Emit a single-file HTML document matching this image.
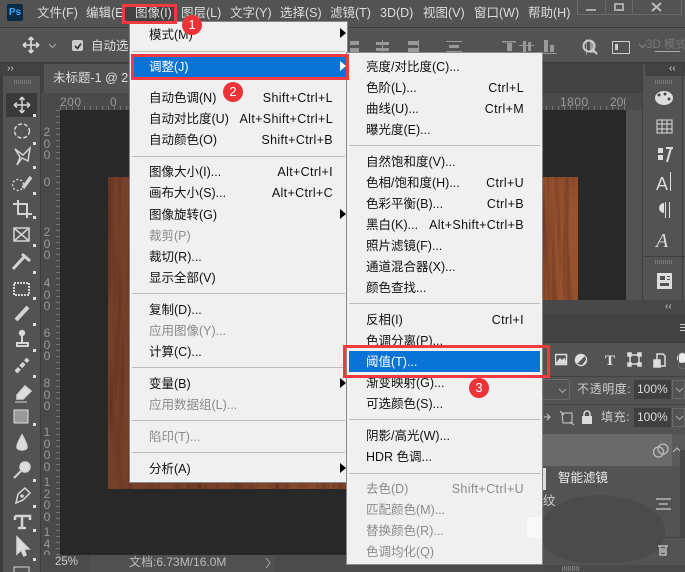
<!DOCTYPE html>
<html><head><meta charset="utf-8"><style>
html,body{margin:0;padding:0;background:#535353}
#r{position:relative;width:685px;height:572px;overflow:hidden;background:#535353;font-family:"Liberation Sans","Noto Sans CJK SC",sans-serif;font-size:12.5px;color:#ddd;filter:blur(.35px)}
#r div,#r span,#r svg{position:absolute}
.t{white-space:nowrap;line-height:16px;margin-top:-8px}
.m{color:#111}.g{color:#8b8b8b}.w{color:#fff}
.s{text-align:right;white-space:nowrap;line-height:16px;margin-top:-8px;letter-spacing:.35px}
.sep{height:1px;background:#bdbdbd}
.a{width:0;height:0;border-left:6px solid #000;border-top:5px solid transparent;border-bottom:5px solid transparent}
.rb{border:3px solid #f23b40;box-sizing:border-box}
.c{width:20px;height:20px;border-radius:50%;background:#ee3338;color:#fff;text-align:center;line-height:19px;font-size:13px}
.rt{color:#999;font-size:12px;line-height:11.500px;width:12px;text-align:center;font-family:"Liberation Sans",sans-serif}
</style></head><body><div id="r">
<!-- top bars -->
<div style="left:0;top:27px;width:685px;height:1px;background:#3b3b3b"></div>
<div style="left:0;top:62px;width:685px;height:2px;background:#3f3f3f"></div>
<div style="left:7px;top:4px;width:16px;height:17px;background:#0b2a45;border-radius:2px;color:#31a8ff;font-size:10px;line-height:17px;text-align:center;font-weight:bold">Ps</div>
<div class="t" style="left:37px;top:13px">文件(F)</div>
<div class="t" style="left:86px;top:13px">编辑(E)</div>
<div style="left:125px;top:5px;width:50px;height:18px;background:#424242"></div>
<div class="t" style="left:135px;top:13px">图像(I)</div>
<div class="t" style="left:181px;top:13px">图层(L)</div>
<div class="t" style="left:230px;top:13px">文字(Y)</div>
<div class="t" style="left:280px;top:13px">选择(S)</div>
<div class="t" style="left:330px;top:13px">滤镜(T)</div>
<div class="t" style="left:380px;top:13px">3D(D)</div>
<div class="t" style="left:423px;top:13px">视图(V)</div>
<div class="t" style="left:474px;top:13px">窗口(W)</div>
<div class="t" style="left:528px;top:13px">帮助(H)</div>
<!-- window buttons -->
<div style="left:577px;top:-2px;width:105px;height:17px;border:1px solid #6a6a6a;box-sizing:border-box"></div>
<div style="left:605px;top:0;width:1px;height:15px;background:#6a6a6a"></div>
<div style="left:632px;top:0;width:1px;height:15px;background:#6a6a6a"></div>
<div style="left:586px;top:9px;width:10px;height:2px;background:#aaa"></div>
<div style="left:614px;top:3px;width:10px;height:8px;border:2px solid #aaa;box-sizing:border-box"></div>
<svg style="left:651px;top:2px" width="11" height="10"><path d="M1 1L10 9M10 1L1 9" stroke="#bbb" stroke-width="2"/></svg>
<!-- options bar -->
<svg style="left:22px;top:36px" width="18" height="18" fill="none" stroke="#ddd" stroke-width="1.600"><path d="M9 1V17M1 9H17M9 1L6.500 4M9 1L11.500 4M9 17L6.500 14M9 17L11.500 14M1 9L4 6.500M1 9L4 11.500M17 9L14 6.500M17 9L14 11.500"/></svg>
<svg style="left:48px;top:43px" width="9" height="6" fill="none" stroke="#aaa"><path d="M1 1L4.500 4.500L8 1"/></svg>
<div style="left:72px;top:40px;width:11px;height:11px;background:#ccc;border-radius:2px"></div>
<svg style="left:73px;top:41px" width="10" height="10" fill="none" stroke="#333" stroke-width="1.600"><path d="M2 5L4.500 7.500L8 2.500"/></svg>
<div class="t" style="left:91px;top:46px;width:38px;overflow:hidden">自动选择</div>
<svg style="left:350px;top:38px" width="330" height="18" fill="#999"><path d="M0 3h9v4h-9zM0 10h9v4h-9zM32 2h1v14h-1zM26 4h13v3h-13zM26 10h13v3h-13zM68 2h1v14h-1zM58 3h10v4h-10zM58 10h10v4h-10zM96 3h16v1h-16zM96 13h16v1h-16zM99 7h10v3h-10z"/><path d="M152 3h14v1.500h-14zM157 5h5v8h-5zM169 7h15v1h-15zM173 3h3v11h-3zM178 4h3v9h-3zM192 15h15v1h-15zM194 2h4v12h-4zM200 7h4v7h-4zM236 1h1v16h-1zM240 3h4v12h-4z"/></svg>
<svg style="left:582px;top:39px" width="25" height="17" fill="none" stroke="#ccc" stroke-width="2"><circle cx="7" cy="7" r="5.500"/><path d="M11 11L15 15"/></svg>
<div style="left:612px;top:41px;width:16px;height:11px;border:1px solid #ccc"></div>
<div style="left:615px;top:44px;width:3px;height:6px;background:#ccc"></div>
<svg style="left:638px;top:43px" width="9" height="6" fill="none" stroke="#888"><path d="M1 1L4.500 4.500L8 1"/></svg>
<div class="t" style="left:646px;top:45px;color:#777;font-size:11.500px;width:39px;overflow:hidden">3D 模式</div>
<div style="left:655px;top:51px;width:25px;height:1px;background:#aaa"></div>
<!-- tab bar -->
<div style="left:41px;top:64px;width:604px;height:29px;background:#424242"></div>
<div style="left:44px;top:64px;width:120px;height:29px;background:#535353"></div>
<div class="t" style="left:53px;top:78px">未标题-1 @ 25%</div>
<div style="left:0;top:64px;width:41px;height:12px;background:#424242"></div>
<div class="t" style="left:7px;top:69px;font-size:10px;color:#ccc">››</div>
<div style="left:14px;top:80px;width:18px;height:4px;background:repeating-linear-gradient(90deg,#777 0 1px,#555 1px 2px)"></div>
<!-- left toolbar -->
<div style="left:0;top:76px;width:3px;height:496px;background:#3c3c3c"></div>
<div style="left:40px;top:64px;width:1px;height:508px;background:#3c3c3c"></div>
<div style="left:6px;top:93px;width:31px;height:24px;background:#3a3a3a"></div>
<svg style="left:3px;top:93px" width="37" height="479" fill="none" stroke="#d4d4d4" stroke-width="1.500">
<path d="M19 4V20M11 12H27M19 4L16.500 7M19 4L21.500 7M19 20L16.500 17M19 20L21.500 17M11 12L14 9.500M11 12L14 14.500M27 12L24 9.500M27 12L24 14.500"/>
<ellipse cx="19" cy="38" rx="7.500" ry="7" stroke-dasharray="4 2"/>
<path d="M12 56L20 62L27 55L25 68L19 65L14 72L17 64Z"/>
<circle cx="15" cy="92" r="5.500" stroke-dasharray="2 2"/><path d="M20 95L28 84" stroke-width="3.500"/>
<path d="M15 107V121H29M10 111H24V125" stroke-width="2"/>
<rect x="11" y="135" width="15" height="13"/><path d="M11 135L26 148M26 135L11 148"/>
<path d="M10 176L21 164M19 161L27 168" stroke-width="3"/>
<rect x="11" y="190" width="15" height="12" stroke-dasharray="2 1" stroke-width="2"/>
<path d="M13 227L25 214" stroke-width="4"/>
<path d="M14 250H25V253H14zM19 241V249" stroke-width="2"/><circle cx="19" cy="240" r="2.500" fill="#ddd"/>
<path d="M13 279L25 266" stroke-width="4" stroke-dasharray="5 2"/>
<path d="M14 302L22 293L28 298L20 306H14Z" fill="#ddd"/><path d="M12 309H24" stroke-width="1"/>
<rect x="11" y="317" width="14" height="13" fill="#999" stroke="#ddd" stroke-width="1"/>
<path d="M19 342C15 349 14 352 14 354C14 358 24 358 24 354C24 352 23 349 19 342Z" fill="#ddd"/>
<circle cx="22" cy="374" r="5" fill="#ddd"/><path d="M18 378L11 385" stroke-width="2"/>
<path d="M13 410L15 401L22 395L27 400L20 407Z"/><circle cx="19" cy="403" r="1" fill="#ddd"/>
<path d="M12 423H27V427M19 423V435M15 435H23M12 427V423" stroke-width="2.500"/>
<path d="M14 444V461L18 457L21 463L23 462L21 456H26Z" fill="#ddd"/>
<rect x="11" y="474" width="15" height="14" stroke-width="1"/>
<g fill="#ddd" stroke="none"><path d="M30 21h3v3h-3zM30 49h3v3h-3zM30 73h3v3h-3zM30 99h3v3h-3zM30 123h3v3h-3zM30 151h3v3h-3zM30 178h3v3h-3zM30 204h3v3h-3zM30 230h3v3h-3zM30 256h3v3h-3zM30 282h3v3h-3zM30 330h3v3h-3zM30 386h3v3h-3zM30 412h3v3h-3zM30 436h3v3h-3zM30 465h3v3h-3z"/></g>
</svg>
<!-- rulers -->
<div style="left:41px;top:93px;width:604px;height:17px;background:#4a4a4a"></div>
<div style="left:41px;top:93px;width:19px;height:479px;background:#4a4a4a"></div>
<div style="left:60px;top:106px;width:566px;height:4px;background:repeating-linear-gradient(90deg,#777 0 1px,transparent 1px 6px)"></div>
<div style="left:56px;top:110px;width:4px;height:450px;background:repeating-linear-gradient(180deg,#777 0 1px,transparent 1px 6px)"></div>
<div class="t" style="left:60px;top:102px;color:#999;font-size:12px;letter-spacing:.5px">200</div>
<div class="t" style="left:110px;top:102px;color:#999;font-size:12px">0</div>
<div class="t" style="left:560px;top:102px;color:#999;font-size:12px;letter-spacing:.5px">1800</div>
<div class="t" style="left:610px;top:102px;color:#999;font-size:12px;width:16px;overflow:hidden">200</div>
<div class="rt" style="left:41px;top:127px">2<br>0<br>0</div>
<div class="rt" style="left:41px;top:177px">0</div>
<div class="rt" style="left:41px;top:227px">2<br>0<br>0</div>
<div class="rt" style="left:41px;top:278px">4<br>0<br>0</div>
<div class="rt" style="left:41px;top:328px">6<br>0<br>0</div>
<div class="rt" style="left:41px;top:378px">8<br>0<br>0</div>
<div class="rt" style="left:41px;top:427px">1<br>0<br>0<br>0</div>
<div class="rt" style="left:41px;top:477px">1<br>2<br>0<br>0</div>
<div class="rt" style="left:41px;top:527px">1<br>4<br>0</div>
<!-- canvas -->
<div style="left:60px;top:110px;width:566px;height:445px;background:#282828"></div>
<svg style="left:108px;top:177px" width="470" height="312"><defs><linearGradient id="wg" x1="0" x2="1" y1="0" y2="0"><stop offset="0" stop-color="#75402a"/><stop offset="1" stop-color="#97532f"/></linearGradient><filter id="w" x="0" y="0" width="100%" height="100%" color-interpolation-filters="sRGB"><feTurbulence type="fractalNoise" baseFrequency="0.14 0.008" numOctaves="3" seed="4"/><feColorMatrix values="0 0 0 0 .3  0 0 0 0 .13  0 0 0 0 .08  1.300 0 0 0 -.5"/></filter></defs><rect width="470" height="312" fill="url(#wg)"/><rect width="470" height="312" filter="url(#w)"/></svg>
<!-- status -->
<div style="left:41px;top:555px;width:604px;height:17px;background:#4b4b4b"></div>
<div style="left:90px;top:555px;width:185px;height:17px;background:#505050"></div>
<div class="t" style="left:55px;top:562px;font-size:11.500px;color:#ccc">25%</div>
<div class="t" style="left:129px;top:562px;font-size:12px;color:#bbb">文档:6.73M/16.0M</div>
<svg style="left:264px;top:557px" width="8" height="12" fill="none" stroke="#aaa"><path d="M2 1L6 6L2 11"/></svg>
<!-- right panels -->
<div style="left:626px;top:110px;width:19px;height:190px;background:#535353"></div>
<div style="left:642px;top:64px;width:1px;height:236px;background:#3f3f3f"></div>
<div style="left:643px;top:64px;width:42px;height:236px;background:#535353"></div>
<div style="left:645px;top:64px;width:40px;height:12px;background:#424242"></div>
<div class="t" style="left:669px;top:69px;font-size:10px;color:#ccc">‹‹</div>
<div style="left:655px;top:80px;width:18px;height:4px;background:repeating-linear-gradient(90deg,#777 0 1px,#555 1px 2px)"></div>
<div style="left:645px;top:256px;width:40px;height:1px;background:#3c3c3c"></div>
<div style="left:682px;top:64px;width:1px;height:236px;background:#3c3c3c"></div>
<svg style="left:645px;top:88px" width="38" height="210" fill="#ddd" stroke="none">
<ellipse cx="19" cy="10" rx="9" ry="7"/><g fill="#444"><circle cx="14" cy="7" r="1.500"/><circle cx="20" cy="6" r="1.500"/><circle cx="24" cy="11" r="1.500"/></g>
<path d="M12 32h15v13h-15z" fill="none" stroke="#ddd"/><path d="M12 36h15M12 41h15M17 32v13M22 32v13" fill="none" stroke="#ddd"/>
<path d="M13 60h5v5h-5zM13 67h5v5h-5z"/><path d="M21 60h7M26 60l-4 14" fill="none" stroke="#ddd" stroke-width="2"/>
<text x="11" y="102" font-size="18" font-family="Liberation Sans">A</text><rect x="25" y="84" width="1" height="19"/>
<path d="M19 115a5 5 0 0 0 0 10v-10zM20 114h1v16h-1zM24 114h1v16h-1z"/>
<text x="11" y="159" font-size="20" font-style="italic" font-family="Liberation Serif">A</text>
<path d="M12 185h15v16h-15z"/><path d="M15 188h5v4h-5zM15 195h9v3h-9zM22 188h3v1h-3zM22 191h3v1h-3z" fill="#535353"/>
</svg>
<div style="left:655px;top:260px;width:18px;height:4px;background:repeating-linear-gradient(90deg,#777 0 1px,#555 1px 2px)"></div>
<!-- lower panel -->
<div style="left:543px;top:300px;width:142px;height:272px;background:#535353"></div>
<div style="left:543px;top:300px;width:142px;height:14px;background:#484848"></div>
<div class="t" style="left:665px;top:307px;font-size:10px;color:#ccc">‹‹</div>
<div style="left:543px;top:314px;width:142px;height:28px;background:#424242"></div>
<div style="left:543px;top:342px;width:142px;height:1px;background:#3a3a3a"></div>
<div style="left:680px;top:324px;width:5px;height:9px;background:repeating-linear-gradient(180deg,#ccc 0 1px,transparent 1px 3px)"></div>
<svg style="left:555px;top:352px" width="130" height="20" fill="none" stroke="#ddd" stroke-width="1.500">
<rect x="0.500" y="2.500" width="11" height="10"/><path d="M2 11L5 7L7 9L9 7L11 11Z" fill="#ddd"/>
<circle cx="26" cy="8" r="5.500" fill="#ddd"/><path d="M22 12L30 4L31 8L27 13Z" fill="#535353" stroke="none"/>
<text x="50" y="13" font-size="15" font-weight="bold" font-family="Liberation Serif" fill="#ddd" stroke="none">T</text>
<rect x="75" y="3" width="9" height="9"/><g fill="#ddd"><rect x="73" y="1" width="3" height="3"/><rect x="83" y="1" width="3" height="3"/><rect x="73" y="11" width="3" height="3"/><rect x="83" y="11" width="3" height="3"/></g>
<path d="M102 2H108L110 4V14H102Z"/><rect x="99" y="8" width="6" height="7" fill="#ddd"/>
<circle cx="127" cy="6" r="5" fill="#eee" stroke="none"/>
</svg>
<div style="left:678px;top:352px;width:7px;height:17px;border:1px solid #6a6a6a;border-right:0;border-radius:4px 0 0 4px;box-sizing:border-box"></div>
<div style="left:543px;top:376px;width:142px;height:1px;background:#404040"></div>
<!-- opacity rows -->
<div style="left:543px;top:379px;width:27px;height:21px;border:1px solid #6a6a6a;border-left:0;border-radius:0 3px 3px 0;box-sizing:border-box"></div>
<svg style="left:558px;top:388px" width="9" height="6" fill="none" stroke="#aaa"><path d="M1 1L4.500 4.500L8 1"/></svg>
<div class="t" style="left:577px;top:389px;color:#ccc;font-size:12px;letter-spacing:.6px">不透明度:</div>
<div style="left:634px;top:380px;width:37px;height:19px;background:#3f3f3f"></div>
<div class="t" style="left:637px;top:389px;color:#ddd;font-size:12px">100%</div>
<div style="left:672px;top:380px;width:13px;height:19px;border:1px solid #6a6a6a;box-sizing:border-box"></div>
<svg style="left:675px;top:387px" width="9" height="6" fill="none" stroke="#aaa"><path d="M1 1L4.500 4.500L8 1"/></svg>
<div style="left:543px;top:404px;width:142px;height:1px;background:#474747"></div>
<svg style="left:543px;top:408px" width="60" height="18" fill="none" stroke="#ccc"><path d="M1 9H6M4 6L7 9L4 12"/><path d="M19 5H29V15H20ZM17 3L21 7M27 14L31 17"/></svg>
<svg style="left:581px;top:410px" width="12" height="14" fill="#ddd"><rect x="1" y="6" width="10" height="8"/><path d="M3 6V4a3 3 0 0 1 6 0V6" fill="none" stroke="#ddd" stroke-width="1.500"/></svg>
<div class="t" style="left:601px;top:417px;color:#ccc;font-size:12px;letter-spacing:.6px">填充:</div>
<div style="left:634px;top:408px;width:37px;height:19px;background:#3f3f3f"></div>
<div class="t" style="left:637px;top:417px;color:#ddd;font-size:12px">100%</div>
<div style="left:672px;top:408px;width:13px;height:19px;border:1px solid #6a6a6a;box-sizing:border-box"></div>
<svg style="left:675px;top:415px" width="9" height="6" fill="none" stroke="#aaa"><path d="M1 1L4.500 4.500L8 1"/></svg>
<div style="left:543px;top:434px;width:129px;height:32px;background:#6a6a6a"></div>
<div style="left:672px;top:434px;width:13px;height:32px;background:#5a5a5a"></div>
<svg style="left:652px;top:442px" width="18" height="16" fill="none" stroke="#bbb" stroke-width="1.300"><circle cx="6.500" cy="10" r="5"/><circle cx="11" cy="7" r="5"/></svg>
<svg style="left:672px;top:447px" width="10" height="7" fill="none" stroke="#bbb"><path d="M1 5L5 1L9 5"/></svg>
<div style="left:543px;top:468px;width:3px;height:22px;background:#ddd"></div>
<div class="t" style="left:558px;top:478px;color:#eee">智能滤镜</div>
<div class="t" style="left:543px;top:501px;color:#ccc">纹</div>
<svg style="left:655px;top:497px" width="17" height="14" fill="none" stroke="#ccc" stroke-width="1.300"><path d="M1 2H16M1 12H16M4 7H13"/></svg>
<div style="left:680px;top:450px;width:5px;height:87px;background:#474747"></div>
<div style="left:543px;top:537px;width:142px;height:1px;background:#444"></div>
<div style="left:543px;top:565px;width:142px;height:7px;background:#4a4a4a"></div>
<div style="left:562px;top:566px;width:18px;height:5px;background:repeating-linear-gradient(90deg,#777 0 1px,#555 1px 2px)"></div>
<!-- smudge -->
<div style="left:541px;top:495px;width:124px;height:68px;background:#4b4b4b;border-radius:50% 55% 45% 40%"></div>
<svg style="left:656px;top:543px" width="14" height="14" fill="none" stroke="#ccc" stroke-width="1.300"><path d="M2 3H12M4 3V12H10V3M6 5V10M8 5V10"/></svg>
<!-- menu 1 -->
<div style="left:130px;top:22px;width:217px;height:460px;background:#f0f0f0;box-shadow:0 0 0 1px #888"></div>
<div class="t m" style="left:149px;top:35px">模式(M)</div><div class="a" style="left:340px;top:28px"></div>
<div class="sep" style="left:132px;top:51px;width:213px"></div>
<div style="left:132px;top:56px;width:215px;height:22px;background:#0a73d6"></div>
<div class="t w" style="left:149px;top:67px">调整(J)</div><div class="a" style="left:340px;top:61px;border-left-color:#fff"></div>
<div class="t m" style="left:149px;top:98px">自动色调(N)</div><div class="s m" style="right:352px;top:98px">Shift+Ctrl+L</div>
<div class="t m" style="left:149px;top:119px">自动对比度(U)</div><div class="s m" style="right:352px;top:119px">Alt+Shift+Ctrl+L</div>
<div class="t m" style="left:149px;top:140px">自动颜色(O)</div><div class="s m" style="right:352px;top:140px">Shift+Ctrl+B</div>
<div class="sep" style="left:132px;top:156px;width:213px"></div>
<div class="t m" style="left:149px;top:172px">图像大小(I)...</div><div class="s m" style="right:352px;top:172px">Alt+Ctrl+I</div>
<div class="t m" style="left:149px;top:193px">画布大小(S)...</div><div class="s m" style="right:352px;top:193px">Alt+Ctrl+C</div>
<div class="t m" style="left:149px;top:215px">图像旋转(G)</div><div class="a" style="left:340px;top:209px"></div>
<div class="t g" style="left:149px;top:236px">裁剪(P)</div>
<div class="t m" style="left:149px;top:257px">裁切(R)...</div>
<div class="t m" style="left:149px;top:278px">显示全部(V)</div>
<div class="sep" style="left:132px;top:293px;width:213px"></div>
<div class="t m" style="left:149px;top:310px">复制(D)...</div>
<div class="t g" style="left:149px;top:331px">应用图像(Y)...</div>
<div class="t m" style="left:149px;top:352px">计算(C)...</div>
<div class="sep" style="left:132px;top:367px;width:213px"></div>
<div class="t m" style="left:149px;top:384px">变量(B)</div><div class="a" style="left:340px;top:378px"></div>
<div class="t g" style="left:149px;top:405px">应用数据组(L)...</div>
<div class="sep" style="left:132px;top:420px;width:213px"></div>
<div class="t g" style="left:149px;top:437px">陷印(T)...</div>
<div class="sep" style="left:132px;top:452px;width:213px"></div>
<div class="t m" style="left:149px;top:469px">分析(A)</div><div class="a" style="left:340px;top:463px"></div>
<!-- menu 2 -->
<div style="left:347px;top:53px;width:195px;height:511px;background:#f0f0f0;box-shadow:0 0 0 1px #888"></div>
<div class="t m" style="left:366px;top:67px">亮度/对比度(C)...</div>
<div class="t m" style="left:366px;top:88px">色阶(L)...</div><div class="s m" style="right:161px;top:88px">Ctrl+L</div>
<div class="t m" style="left:366px;top:109px">曲线(U)...</div><div class="s m" style="right:161px;top:109px">Ctrl+M</div>
<div class="t m" style="left:366px;top:130px">曝光度(E)...</div>
<div class="sep" style="left:349px;top:145px;width:191px"></div>
<div class="t m" style="left:366px;top:162px">自然饱和度(V)...</div>
<div class="t m" style="left:366px;top:183px">色相/饱和度(H)...</div><div class="s m" style="right:161px;top:183px">Ctrl+U</div>
<div class="t m" style="left:366px;top:204px">色彩平衡(B)...</div><div class="s m" style="right:161px;top:204px">Ctrl+B</div>
<div class="t m" style="left:366px;top:225px">黑白(K)...</div><div class="s m" style="right:161px;top:225px">Alt+Shift+Ctrl+B</div>
<div class="t m" style="left:366px;top:246px">照片滤镜(F)...</div>
<div class="t m" style="left:366px;top:267px">通道混合器(X)...</div>
<div class="t m" style="left:366px;top:288px">颜色查找...</div>
<div class="sep" style="left:349px;top:303px;width:191px"></div>
<div class="t m" style="left:366px;top:320px">反相(I)</div><div class="s m" style="right:161px;top:320px">Ctrl+I</div>
<div class="t m" style="left:366px;top:341px">色调分离(P)...</div>
<div style="left:349px;top:351px;width:191px;height:21px;background:#0a73d6"></div>
<div class="t w" style="left:366px;top:362px">阈值(T)...</div>
<div class="t m" style="left:366px;top:383px">渐变映射(G)...</div>
<div class="t m" style="left:366px;top:404px">可选颜色(S)...</div>
<div class="sep" style="left:349px;top:419px;width:191px"></div>
<div class="t m" style="left:366px;top:436px">阴影/高光(W)...</div>
<div class="t m" style="left:366px;top:457px">HDR 色调...</div>
<div class="sep" style="left:349px;top:473px;width:191px"></div>
<div class="t g" style="left:366px;top:489px">去色(D)</div><div class="s g" style="right:161px;top:489px">Shift+Ctrl+U</div>
<div class="t g" style="left:366px;top:510px">匹配颜色(M)...</div>
<div class="t g" style="left:366px;top:531px">替换颜色(R)...</div>
<div class="t g" style="left:366px;top:552px">色调均化(Q)</div>
<!-- watermark -->
<div style="left:527px;top:517px;width:15px;height:21px;background:#f8f8f8"></div>
<!-- red boxes -->
<div class="rb" style="left:122px;top:4px;width:55px;height:20px"></div>
<div class="rb" style="left:131px;top:54px;width:218px;height:26px"></div>
<div class="rb" style="left:343px;top:345px;width:207px;height:33px"></div>
<div class="c" style="left:182px;top:15px">1</div>
<div class="c" style="left:223px;top:82px">2</div>
<div class="c" style="left:469px;top:378px">3</div>
</div></body></html>
